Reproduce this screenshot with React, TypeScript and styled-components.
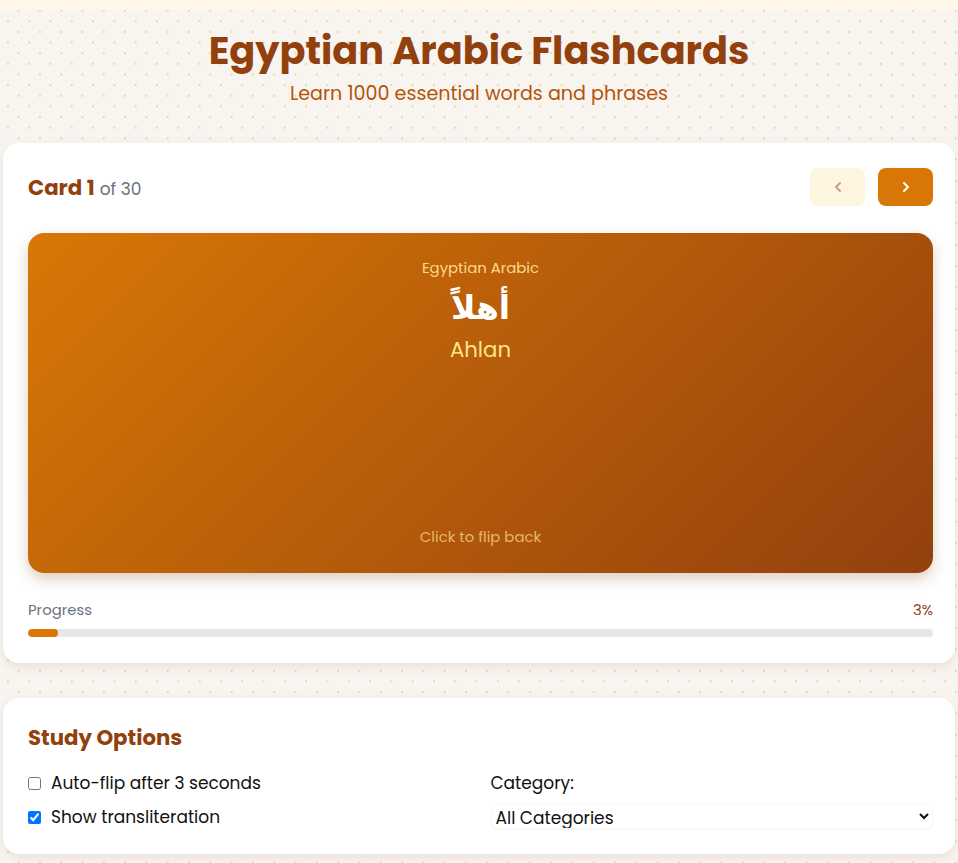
import React, { useState } from "react";
import styled, { createGlobalStyle } from "styled-components";
import { ChevronLeft, ChevronRight } from "lucide-react";

const GlobalStyle = createGlobalStyle`
  html {
    font-size: 17px;
  }
  html, body {
    margin: 0;
    padding: 0;
  }
  body {
    font-family: "Poppins", "Inter", "DejaVu Sans", sans-serif;
    background-color: #f8f5f1;
    background-image:
      radial-gradient(#f2d596 0.9px, transparent 1.1px),
      radial-gradient(#f2d596 0.9px, transparent 1.1px);
    background-size: 21.3px 21.3px;
    background-position: 8px 0px, 18.6px 10.6px;
  }
`;

const TopStrip = styled.div`
  height: 10px;
  background: #fff7ec;
`;

const Page = styled.div`
  padding: 0 3px 8px;
`;

const Header = styled.header`
  text-align: center;
  padding: 18px 0 37px;
`;

const Title = styled.h1`
  margin: 0;
  font-size: 2.25rem;
  line-height: 46px;
  font-weight: 700;
  color: #92400e;
`;

const Subtitle = styled.p`
  margin: 8px 0 0;
  font-size: 1.125rem;
  line-height: 24px;
  color: #b45309;
`;

const Panel = styled.section<{ $top?: number; $pad?: string }>`
  background: #fff;
  border-radius: 16px;
  box-shadow: 0 4px 12px rgba(120, 80, 40, 0.12);
  padding: ${({ $pad }) => $pad ?? "25px 22px 26px 25px"};
  margin-top: ${({ $top }) => $top ?? 0}px;
`;

const CardHeader = styled.div`
  display: flex;
  align-items: center;
  justify-content: space-between;
  height: 38px;
`;

const Counter = styled.div`
  display: flex;
  align-items: baseline;
  gap: 5px;
`;

const CounterMain = styled.span`
  font-size: 1.25rem;
  font-weight: 700;
  color: #92400e;
`;

const CounterSub = styled.span`
  font-size: 1rem;
  color: #6b7280;
`;

const NavGroup = styled.div`
  display: flex;
  gap: 13px;
`;

const NavButton = styled.button<{ $disabled?: boolean }>`
  width: 55px;
  height: 38px;
  border: none;
  border-radius: 8px;
  display: flex;
  align-items: center;
  justify-content: center;
  cursor: ${({ $disabled }) => ($disabled ? "default" : "pointer")};
  background: ${({ $disabled }) => ($disabled ? "#fef5e1" : "#d97706")};
  color: ${({ $disabled }) => ($disabled ? "#c9a088" : "#ffffff")};
`;

const Flashcard = styled.div`
  margin-top: 27px;
  height: 340px;
  box-sizing: border-box;
  border-radius: 16px;
  background: linear-gradient(135deg, #d97706 0%, #92400e 100%);
  box-shadow: 0 6px 14px rgba(120, 60, 10, 0.25);
  display: flex;
  flex-direction: column;
  align-items: center;
  padding: 25px 24px 26px;
  cursor: pointer;
`;

const Language = styled.div`
  font-size: 0.875rem;
  line-height: 20px;
  color: #fcd98a;
`;

const Arabic = styled.div`
  margin-top: 8px;
  font-family: "DejaVu Sans", sans-serif;
  font-size: 33px;
  line-height: 44px;
  font-weight: 700;
  color: #ffffff;
`;

const Translit = styled.div`
  margin-top: 6px;
  font-size: 1.25rem;
  line-height: 28px;
  color: #fde68a;
`;

const FlipHint = styled.div`
  margin-top: auto;
  font-size: 0.875rem;
  line-height: 20px;
  color: #e9b56a;
`;

const ProgressRow = styled.div`
  margin-top: 27px;
  display: flex;
  justify-content: space-between;
  font-size: 0.875rem;
  line-height: 20px;
`;

const ProgressLabel = styled.span`
  color: #6b7280;
`;

const ProgressValue = styled.span`
  color: #92400e;
`;

const Track = styled.div`
  margin-top: 9px;
  height: 8px;
  border-radius: 4px;
  background: #e5e7eb;
  overflow: hidden;
`;

const Fill = styled.div`
  height: 100%;
  border-radius: 4px;
  background: #d97706;
`;

const SectionTitle = styled.h2`
  margin: 0;
  font-size: 1.25rem;
  line-height: 28px;
  font-weight: 700;
  color: #92400e;
`;

const OptionsGrid = styled.div`
  margin-top: 19px;
  display: grid;
  grid-template-columns: 1fr 1fr;
  column-gap: 20px;
`;

const Column = styled.div<{ $gap: number }>`
  display: flex;
  flex-direction: column;
  gap: ${({ $gap }) => $gap}px;
`;

const CheckRow = styled.label`
  display: flex;
  align-items: center;
  gap: 10px;
  font-size: 1rem;
  line-height: 24px;
  color: #111;
  cursor: pointer;

  input {
    margin: 0;
    width: 13px;
    height: 13px;
  }
`;

const FieldLabel = styled.label`
  font-size: 1rem;
  line-height: 24px;
  color: #111;
`;

const Select = styled.select`
  height: 25px;
  font-family: inherit;
  font-size: 1rem;
  color: #111;
  border: 1px solid #f8f8f8;
  border-radius: 6px;
  background: #fff;
  box-shadow: 0 1px 2px rgba(0, 0, 0, 0.04);
  padding: 0;
`;

const total = 30;

export default function App() {
  const [index, setIndex] = useState(0);
  const [autoFlip, setAutoFlip] = useState(false);
  const [showTranslit, setShowTranslit] = useState(true);
  const progress = ((index + 1) / total) * 100;

  return (
    <>
      <GlobalStyle />
      <TopStrip />
      <Page>
        <Header>
          <Title>Egyptian Arabic Flashcards</Title>
          <Subtitle>Learn 1000 essential words and phrases</Subtitle>
        </Header>

        <Panel>
          <CardHeader>
            <Counter>
              <CounterMain>Card {index + 1}</CounterMain>
              <CounterSub>of {total}</CounterSub>
            </Counter>
            <NavGroup>
              <NavButton
                $disabled={index === 0}
                onClick={() => setIndex((i) => Math.max(0, i - 1))}
              >
                <ChevronLeft size={16} strokeWidth={3} />
              </NavButton>
              <NavButton onClick={() => setIndex((i) => Math.min(total - 1, i + 1))}>
                <ChevronRight size={16} strokeWidth={3} />
              </NavButton>
            </NavGroup>
          </CardHeader>

          <Flashcard>
            <Language>Egyptian Arabic</Language>
            <Arabic dir="rtl">أهلاً</Arabic>
            {showTranslit && <Translit>Ahlan</Translit>}
            <FlipHint>Click to flip back</FlipHint>
          </Flashcard>

          <ProgressRow>
            <ProgressLabel>Progress</ProgressLabel>
            <ProgressValue>{Math.round(progress)}%</ProgressValue>
          </ProgressRow>
          <Track>
            <Fill style={{ width: `${progress}%` }} />
          </Track>
        </Panel>

        <Panel $top={35} $pad="26px 22px 25px 25px">
          <SectionTitle>Study Options</SectionTitle>
          <OptionsGrid>
            <Column $gap={10}>
              <CheckRow>
                <input
                  type="checkbox"
                  checked={autoFlip}
                  onChange={() => setAutoFlip(!autoFlip)}
                />
                Auto-flip after 3 seconds
              </CheckRow>
              <CheckRow>
                <input
                  type="checkbox"
                  checked={showTranslit}
                  onChange={() => setShowTranslit(!showTranslit)}
                />
                Show transliteration
              </CheckRow>
            </Column>
            <Column $gap={9}>
              <FieldLabel>Category:</FieldLabel>
              <Select defaultValue="all">
                <option value="all">All Categories</option>
                <option value="greetings">Greetings</option>
                <option value="numbers">Numbers</option>
              </Select>
            </Column>
          </OptionsGrid>
        </Panel>
      </Page>
    </>
  );
}
